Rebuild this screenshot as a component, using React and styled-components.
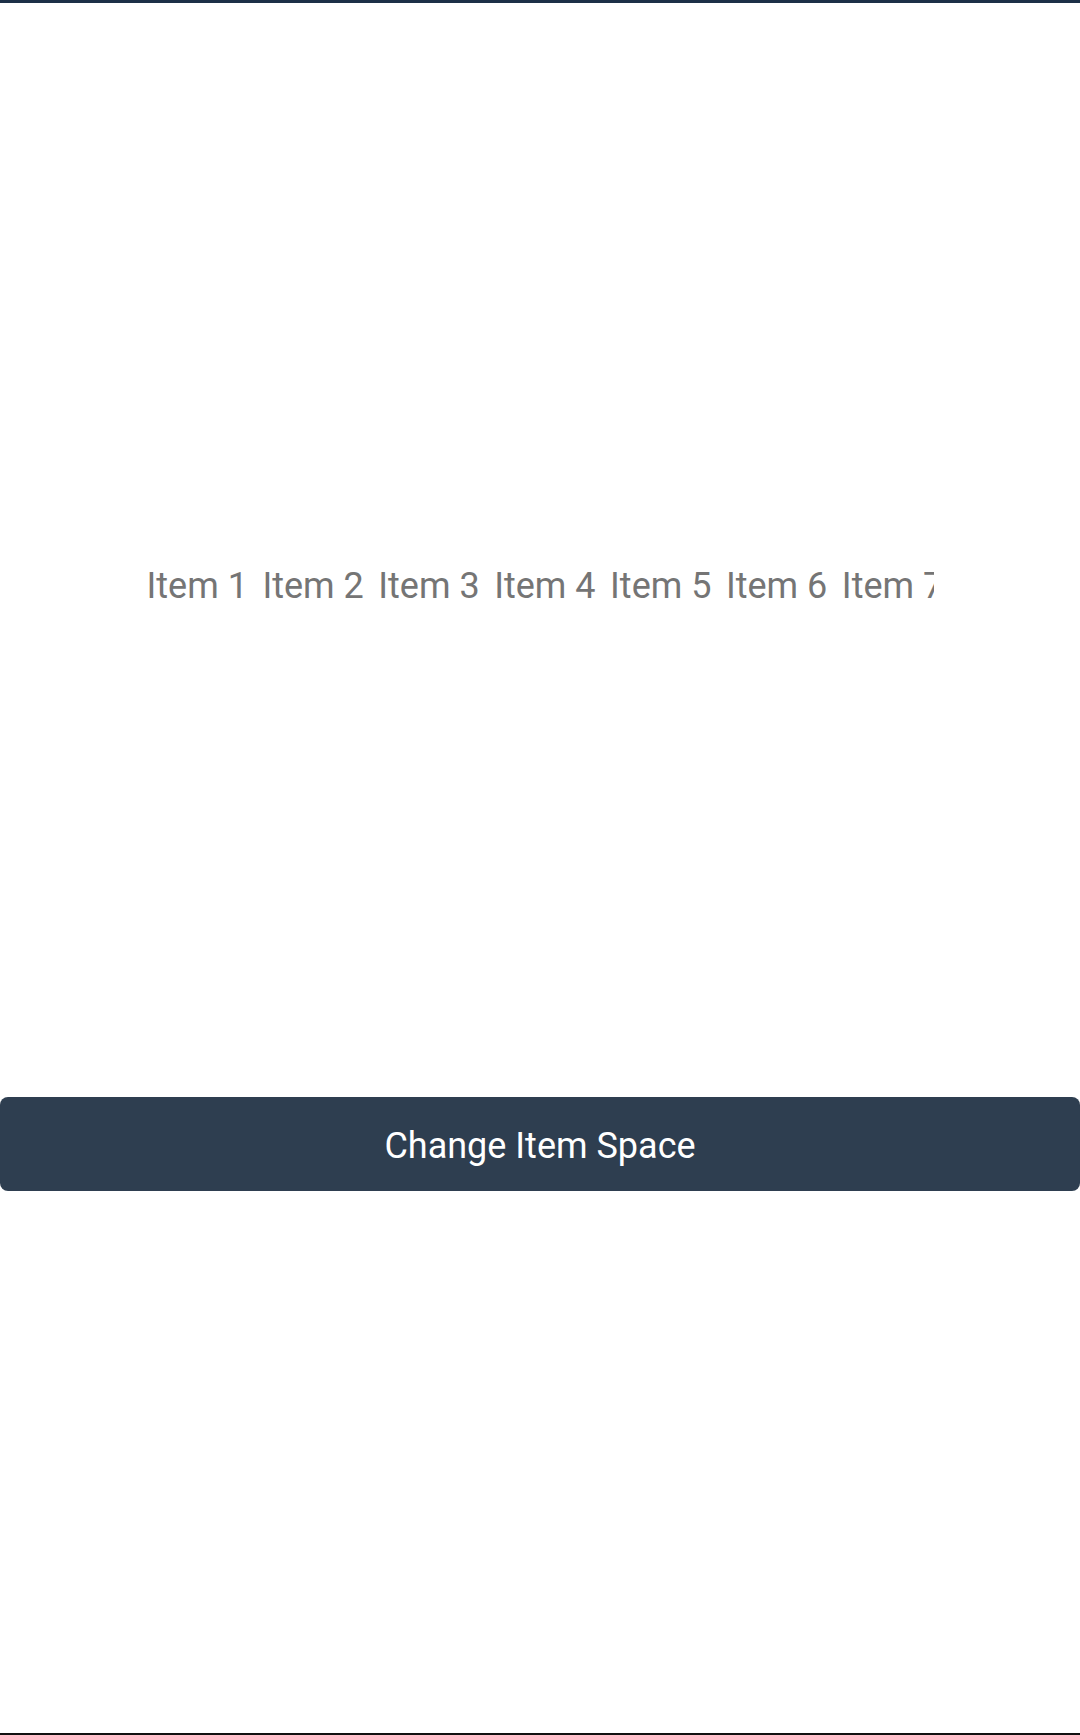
import React, { useState } from 'react';
import styled, { createGlobalStyle } from 'styled-components';

const GlobalStyle = createGlobalStyle`
  html, body {
    margin: 0;
    padding: 0;
    background: #ffffff;
    font-family: Roboto, "Liberation Sans", sans-serif;
  }
`;

const Page = styled.div`
  box-sizing: border-box;
  height: 1735px;
  border-top: 3px solid #1d3047;
  border-bottom: 2px solid #111111;
  display: flex;
  flex-direction: column;
  overflow: hidden;
`;

const ItemsArea = styled.div`
  flex: none;
  box-sizing: border-box;
  height: 1094px;
  padding-top: 562px;
`;

const Strip = styled.div`
  width: 787px;
  margin: 0 auto;
  display: flex;
  gap: ${(p) => p.$space}px;
  overflow: hidden;
  white-space: nowrap;
`;

const Item = styled.span`
  flex: none;
  font-size: 36px;
  line-height: 42px;
  color: #757575;
`;

const Button = styled.button`
  flex: none;
  display: block;
  width: 100%;
  height: 94px;
  padding: 3px 0 0;
  border: none;
  border-radius: 8px;
  background: #2e3e50;
  color: #ffffff;
  font-family: Roboto, "Liberation Sans", sans-serif;
  font-size: 36px;
  cursor: pointer;
`;

const items = Array.from({ length: 10 }, (_, i) => `Item ${i + 1}`);

export default function App() {
  const [space, setSpace] = useState(14.5);

  return (
    <>
      <GlobalStyle />
      <Page>
        <ItemsArea>
          <Strip $space={space}>
            {items.map((label) => (
              <Item key={label}>{label}</Item>
            ))}
          </Strip>
        </ItemsArea>
        <Button onClick={() => setSpace(space === 14.5 ? 30 : 14.5)}>
          Change Item Space
        </Button>
      </Page>
    </>
  );
}
